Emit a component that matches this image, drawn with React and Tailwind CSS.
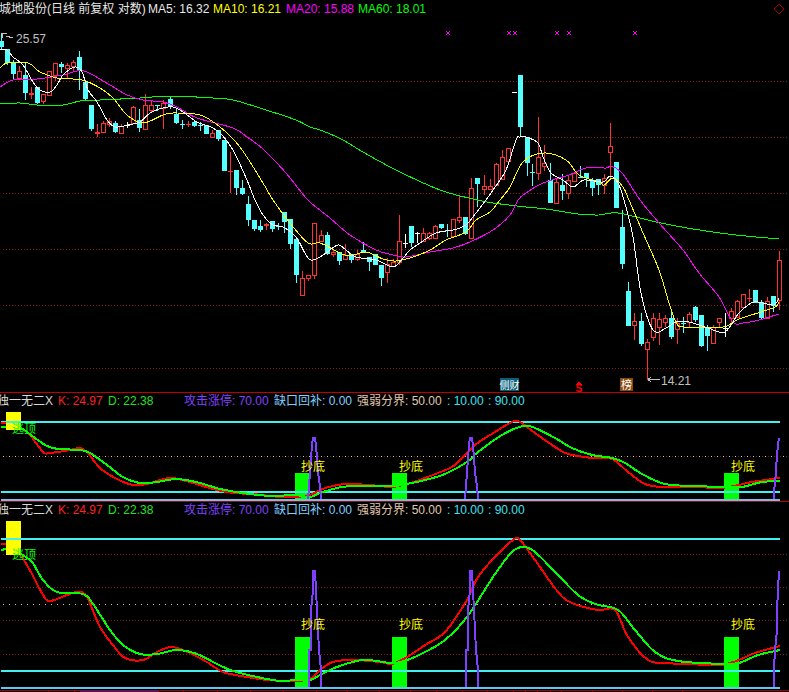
import React from 'react';

const CYAN = '#54ffff';
const RED = '#ff3232';
const PURPLE = '#8040ff';

// x, colour, wick top, body top, body bottom, wick bottom
const candles = [
  [1, 'c', 33, 41, 47, 50], [7, 'c', 49, 49, 63, 65], [13, 'c', 60, 63, 74, 79], [19, 'r', 66, 71, 78, 78],
  [25, 'c', 63, 75, 93, 100], [31, 'r', 87, 93, 94, 99], [37, 'c', 87, 87, 103, 104], [43, 'r', 94, 94, 101, 104],
  [49, 'r', 71, 71, 95, 95], [55, 'r', 63, 63, 75, 81], [61, 'c', 62, 64, 67, 73], [67, 'r', 63, 65, 68, 79],
  [73, 'r', 60, 62, 66, 71], [79, 'c', 51, 57, 71, 90], [85, 'c', 80, 82, 99, 101], [91, 'c', 105, 105, 129, 131],
  [97, 'r', 124, 132, 133, 137], [103, 'r', 121, 123, 132, 133], [109, 'r', 118, 121, 124, 127], [115, 'c', 121, 123, 132, 133],
  [121, 'r', 124, 126, 133, 133], [127, 'w', 122, 125, 125, 128], [133, 'r', 106, 107, 123, 124], [139, 'c', 109, 120, 128, 132],
  [145, 'r', 94, 105, 129, 129], [151, 'r', 100, 105, 110, 113], [157, 'c', 105, 105, 105, 111], [163, 'r', 100, 103, 108, 129],
  [170, 'c', 96, 99, 107, 109], [176, 'c', 108, 114, 123, 124], [182, 'c', 120, 124, 124, 129], [188, 'r', 121, 124, 124, 127],
  [194, 'c', 121, 122, 126, 127], [200, 'c', 122, 125, 125, 131], [206, 'c', 125, 125, 134, 134], [212, 'r', 130, 133, 137, 137],
  [218, 'c', 130, 130, 139, 141], [224, 'c', 140, 140, 171, 171], [230, 'r', 152, 171, 171, 193], [236, 'c', 170, 170, 188, 195],
  [242, 'c', 180, 188, 194, 195], [248, 'c', 196, 204, 220, 226], [254, 'c', 220, 220, 229, 231], [260, 'c', 220, 226, 230, 232],
  [266, 'r', 223, 224, 225, 230], [272, 'c', 221, 221, 229, 232], [278, 'c', 223, 226, 226, 230], [284, 'c', 212, 212, 222, 233],
  [290, 'c', 219, 219, 244, 249], [296, 'c', 239, 239, 275, 283], [302, 'r', 271, 278, 295, 295], [308, 'r', 275, 275, 278, 281],
  [314, 'r', 223, 223, 275, 279], [321, 'r', 230, 235, 241, 241], [327, 'c', 232, 235, 254, 255], [333, 'r', 250, 252, 254, 257],
  [339, 'c', 252, 252, 261, 265], [345, 'r', 244, 255, 259, 259], [351, 'c', 254, 254, 260, 263], [357, 'r', 250, 254, 259, 261],
  [363, 'c', 242, 250, 253, 253], [369, 'c', 257, 257, 262, 271], [375, 'c', 254, 254, 265, 265], [381, 'c', 265, 265, 278, 286],
  [387, 'r', 258, 264, 272, 283], [393, 'r', 259, 262, 266, 266], [399, 'r', 215, 241, 262, 265], [405, 'w', 234, 243, 243, 248],
  [411, 'c', 226, 226, 243, 247], [417, 'w', 232, 233, 233, 243], [423, 'r', 228, 233, 241, 241], [429, 'r', 232, 233, 238, 240],
  [435, 'r', 225, 226, 238, 238], [441, 'c', 224, 224, 228, 229], [447, 'c', 224, 230, 230, 237], [453, 'r', 219, 219, 236, 236],
  [459, 'r', 196, 217, 220, 223], [465, 'c', 217, 217, 234, 235], [471, 'r', 178, 188, 238, 238], [477, 'c', 178, 178, 184, 207],
  [484, 'r', 175, 186, 189, 195], [490, 'r', 179, 186, 189, 189], [496, 'r', 163, 164, 185, 185], [502, 'r', 150, 157, 179, 179],
  [508, 'r', 148, 148, 161, 161], [514, 'w', 92, 92, 92, 92], [520, 'c', 75, 75, 127, 137], [527, 'c', 137, 137, 163, 176],
  [532, 'c', 164, 172, 172, 186], [538, 'r', 117, 157, 173, 180], [544, 'r', 145, 163, 166, 171], [550, 'c', 163, 180, 203, 203],
  [556, 'r', 178, 182, 203, 203], [562, 'c', 174, 185, 191, 200], [568, 'r', 175, 180, 193, 199], [574, 'r', 172, 173, 181, 181],
  [580, 'c', 166, 177, 177, 177], [586, 'c', 173, 173, 178, 187], [592, 'c', 178, 180, 188, 196], [598, 'c', 179, 179, 185, 195],
  [604, 'r', 174, 178, 185, 194], [610, 'r', 123, 146, 152, 178], [616, 'c', 162, 162, 208, 208], [622, 'c', 210, 227, 264, 269],
  [628, 'c', 282, 291, 326, 326], [634, 'r', 313, 321, 325, 340], [641, 'c', 313, 321, 344, 346], [647, 'r', 339, 342, 349, 380],
  [653, 'r', 313, 318, 337, 341], [659, 'r', 313, 319, 327, 345], [665, 'r', 315, 318, 322, 327], [671, 'c', 312, 318, 337, 339],
  [677, 'r', 318, 323, 329, 344], [683, 'c', 317, 323, 323, 333], [689, 'r', 312, 314, 322, 327], [695, 'c', 306, 307, 320, 322],
  [701, 'c', 315, 315, 346, 347], [707, 'c', 325, 328, 336, 351], [713, 'r', 325, 327, 343, 343], [719, 'r', 318, 318, 322, 327],
  [725, 'w', 313, 328, 328, 337], [731, 'r', 308, 311, 318, 323], [737, 'r', 300, 301, 317, 317], [743, 'r', 294, 294, 307, 307],
  [749, 'r', 289, 298, 298, 302], [755, 'c', 290, 290, 303, 303], [761, 'c', 300, 302, 318, 319], [767, 'r', 297, 301, 318, 319],
  [773, 'c', 296, 296, 306, 312], [779, 'r', 251, 260, 300, 310],
];

const ma5 = [[0,50],[7,50],[13,57],[23,65],[33,82],[40,90],[50,92],[57,85],[63,75],[75,67],[82,72],[88,90],[97,102],[107,120],[115,127],[128,125],[140,122],[150,113],[163,108],[173,107],[183,112],[197,122],[213,128],[222,135],[233,150],[247,180],[255,200],[263,215],[273,225],[283,227],[296,237],[308,258],[316,259],[326,253],[338,245],[346,250],[356,257],[376,260],[393,267],[403,258],[410,250],[420,243],[436,233],[453,230],[466,225],[476,213],[486,200],[493,190],[506,170],[516,140],[520,137],[526,137],[538,143],[543,157],[551,173],[563,180],[573,187],[584,180],[603,182],[610,176],[618,183],[624,200],[633,237],[641,293],[653,330],[666,328],[676,322],[689,322],[708,328],[725,332],[739,313],[754,302],[773,305],[779,298]];
const ma10 = [[0,68],[7,63],[28,63],[40,72],[57,78],[82,80],[100,88],[113,98],[127,115],[143,123],[163,115],[173,113],[200,115],[220,127],[240,147],[263,183],[273,200],[290,223],[308,243],[320,243],[340,253],[350,256],[366,252],[383,259],[396,261],[413,257],[430,250],[446,240],[466,232],[476,220],[490,212],[500,200],[510,187],[523,162],[544,153],[566,160],[579,175],[599,182],[604,185],[613,178],[623,187],[629,200],[643,233],[659,270],[669,303],[676,322],[684,327],[723,327],[739,319],[773,308],[779,302]];
const ma20 = [[0,87],[13,80],[37,79],[63,75],[77,71],[87,72],[110,85],[127,95],[143,100],[163,102],[177,107],[197,118],[233,128],[247,137],[263,149],[286,173],[308,200],[330,218],[350,235],[376,250],[393,255],[406,257],[430,252],[453,248],[470,242],[493,230],[510,215],[518,200],[526,193],[543,183],[569,175],[586,168],[606,168],[611,166],[621,172],[629,183],[640,200],[659,223],[683,250],[699,273],[719,297],[733,322],[743,323],[759,320],[779,314]];
const ma60 = [[0,104],[20,103],[37,105],[63,105],[80,101],[100,100],[140,98],[170,96],[213,98],[233,100],[263,109],[296,120],[310,127],[323,131],[343,140],[363,152],[396,170],[440,190],[473,199],[493,203],[526,207],[546,209],[578,214],[599,215],[618,213],[656,222],[693,229],[736,235],[779,239]];

const kd1Red = [[1,423],[6,423]];
const kd1Green = [[1,427],[6,427]];
const k1 = [[21,428],[30,435],[43,452],[50,453],[70,450],[80,448],[88,453],[100,468],[117,479],[133,485],[147,484],[170,478],[193,483],[213,489],[233,493],[253,494],[280,497],[295,497],[310,495],[320,490],[333,486],[347,484],[370,485],[392,487],[407,484],[425,478],[438,473],[455,465],[475,445],[495,432],[512,422],[520,422],[535,433],[555,447],[568,454],[592,458],[612,459],[628,472],[645,484],[662,487],[695,487],[720,488],[739,485],[752,482],[780,478]];
const d1 = [[21,428],[27,432],[35,438],[47,446],[58,449],[80,450],[90,453],[107,465],[123,477],[140,483],[157,482],[177,479],[200,483],[220,489],[250,494],[273,496],[295,495],[310,497],[320,493],[337,488],[353,486],[392,486],[407,484],[425,480],[445,474],[467,462],[478,452],[502,435],[523,426],[535,428],[555,438],[572,448],[592,455],[612,458],[625,463],[642,474],[665,484],[695,486],[724,487],[742,487],[762,482],[780,481]];

const kd2Red = [[1,544],[6,544]];
const kd2Green = [[1,550],[6,549]];
const k2 = [[21,555],[32,574],[43,595],[50,601],[67,595],[78,592],[87,597],[100,627],[113,645],[125,658],[143,660],[157,652],[172,647],[190,653],[207,662],[223,672],[247,677],[267,680],[295,681],[310,679],[320,670],[333,662],[353,660],[380,662],[392,664],[407,657],[425,645],[445,632],[467,600],[478,577],[495,557],[513,540],[520,540],[535,560],[558,592],[572,603],[598,610],[615,610],[628,637],[648,660],[665,663],[688,664],[720,665],[739,660],[755,653],[780,646]];
const d2 = [[21,554],[32,562],[43,580],[57,592],[83,594],[93,604],[110,630],[123,645],[140,654],[157,654],[177,650],[197,654],[217,664],[233,671],[257,677],[280,681],[295,680],[310,680],[320,675],[337,667],[363,660],[392,663],[407,660],[425,652],[445,640],[467,617],[495,574],[512,552],[523,547],[535,552],[558,575],[578,595],[595,604],[618,610],[635,630],[655,652],[678,661],[724,664],[739,663],[758,655],[780,650]];

const pts = (list) => list.map((p) => p.join(',')).join(' ');

// catmull-rom through the points so the averages don't look kinked
const curve = (list) => {
  let d = `M${list[0][0]} ${list[0][1]}`;
  for (let i = 0; i < list.length - 1; i++) {
    const p0 = list[i - 1] || list[i];
    const p1 = list[i];
    const p2 = list[i + 1];
    const p3 = list[i + 2] || p2;
    const c1 = [p1[0] + (p2[0] - p0[0]) / 6, p1[1] + (p2[1] - p0[1]) / 6];
    const c2 = [p2[0] - (p3[0] - p1[0]) / 6, p2[1] - (p3[1] - p1[1]) / 6];
    d += ` C${c1[0]} ${c1[1]} ${c2[0]} ${c2[1]} ${p2[0]} ${p2[1]}`;
  }
  return d;
};

// purple spikes are the same shape, only moved along x
const spike1 = (dx) => pts([[308,499],[309,487],[310,472],[312,445],[313,438],[315,438],[316,445],[318,472],[320,487],[321,499]].map(([x, y]) => [x + dx, y]));
const spike2 = (dx) => pts([[309,687],[309,650],[311,650],[311,610],[313,590],[313,571],[315,571],[316,590],[317,610],[319,650],[321,670],[321,687]].map(([x, y]) => [x + dx, y]));

const Line = ({ points, color, width = 1 }) => (
  <path d={curve(points)} fill="none" stroke={color} strokeWidth={width} />
);

const Dots = ({ y, color = '#8c1c1c', dash = '1 2', from = 3, to = 789 }) => (
  <line x1={from} x2={to} y1={y + 0.5} y2={y + 0.5} stroke={color} strokeDasharray={dash} />
);

const Candle = ({ c }) => {
  const [x, kind, wickTop, top, bottom, wickBottom] = c;
  const color = kind === 'c' ? CYAN : kind === 'r' ? RED : '#ffffff';
  const doji = bottom - top < 1;
  return (
    <g>
      <line x1={x + 0.5} x2={x + 0.5} y1={wickTop} y2={wickBottom} stroke={color} />
      {doji ? (
        <line x1={x - 2} x2={x + 3} y1={top + 0.5} y2={top + 0.5} stroke={color} />
      ) : kind === 'r' ? (
        <rect x={x - 1.5} y={top + 0.5} width={4} height={bottom - top} fill="#000000" stroke={color} />
      ) : (
        <rect x={x - 2} y={top} width={5} height={bottom - top} fill={color} />
      )}
    </g>
  );
};

const Cross = ({ x }) => (
  <path d={`M${x - 2} 31 L${x + 2} 35 M${x + 2} 31 L${x - 2} 35`} stroke="#ff00ff" fill="none" />
);

const Label = ({ x, y, color, children }) => (
  <text x={x} y={y} fill={color} fontSize="12" textAnchor="middle" fontFamily="'Liberation Sans','Noto Sans CJK SC',sans-serif">
    {children}
  </text>
);

const MainChart = () => (
  <svg className="absolute inset-0" width="789" height="393" viewBox="0 0 789 393" shapeRendering="crispEdges">
    <Dots y={81} /><Dots y={137} /><Dots y={193} /><Dots y={249} /><Dots y={305} /><Dots y={368} />
    {candles.map((c) => <Candle key={c[0]} c={c} />)}
    <Line points={ma60} color="#00ff00" />
    <Line points={ma20} color="#ff00ff" />
    <Line points={ma10} color="#ffff00" />
    <Line points={ma5} color="#ffffff" />
    {[448, 509, 515, 557, 569, 635].map((x) => <Cross key={x} x={x} />)}
    <path d="M779 4 L784 9 L779 14 L774 9 Z" fill="none" stroke="#a00000" />
    <path d="M1 33 L7 33 M2 33 L2 38 M6 36 L13 38" stroke="#c0c0c0" fill="none" />
    <text x="16" y="43" fill="#c0c0c0" fontSize="12" fontFamily="'Liberation Sans',sans-serif">25.57</text>
    <path d="M648 379.5 L660 379.5 M648 379.5 L651 377 M648 379.5 L651 382" stroke="#c0c0c0" fill="none" />
    <text x="661" y="385" fill="#c0c0c0" fontSize="12" fontFamily="'Liberation Sans',sans-serif">14.21</text>
    <rect x="500" y="378" width="19" height="13" fill="#0a5f78" />
    <text x="509.5" y="389" fill="#ffffff" fontSize="10" textAnchor="middle" fontFamily="'Noto Sans CJK SC',sans-serif">侧财</text>
    <path d="M579 381 L582 385 L576 385 Z" fill="#ff0000" />
    <text x="579" y="392" fill="#ff0000" fontSize="10" fontWeight="700" textAnchor="middle" fontFamily="'Liberation Sans',sans-serif">S</text>
    <rect x="620" y="378" width="13" height="13" fill="#8a4a10" />
    <text x="626.5" y="389" fill="#ffffff" fontSize="11" textAnchor="middle" fontFamily="'Noto Sans CJK SC',sans-serif">榜</text>
  </svg>
);

const FirstIndicator = () => (
  <svg className="absolute inset-0" width="789" height="109" viewBox="0 393 789 109" shapeRendering="crispEdges">
    <Dots y={456} dash="1 2" />
    <Dots y={456} color="#e0c8b0" dash="1 5" />
    <rect x="6" y="412" width="15" height="18" fill="#ffff00" />
    {[295, 392, 724].map((x) => <rect key={x} x={x} y="473" width="15" height="26" fill="#00ff00" />)}
    <line x1="1" x2="780" y1="421.5" y2="421.5" stroke="#40f0f0" strokeWidth="2" />
    <line x1="1" x2="780" y1="491.5" y2="491.5" stroke="#40f0f0" strokeWidth="2" />
    <line x1="1" x2="780" y1="499.5" y2="499.5" stroke="#60c8f0" strokeWidth="2" />
    <Line points={kd1Red} color="#ff0000" width={2} />
    <Line points={kd1Green} color="#00ff00" width={2} />
    <Line points={k1} color="#ff0000" width={2} />
    <Line points={d1} color="#00ff00" width={2} />
    <polyline points={spike1(0)} fill="none" stroke={PURPLE} strokeWidth="2" />
    <polyline points={spike1(157)} fill="none" stroke={PURPLE} strokeWidth="2" />
    <polyline points={pts([[774,499],[774,490],[775,484],[776,470],[777,455],[778,445],[779,438]])} fill="none" stroke={PURPLE} strokeWidth="2" />
    <Label x={24} y={433} color="#00ff00">逃顶</Label>
    <Label x={313} y={471} color="#ffff00">抄底</Label>
    <Label x={411} y={471} color="#ffff00">抄底</Label>
    <Label x={743} y={471} color="#ffff00">抄底</Label>
  </svg>
);

const SecondIndicator = () => (
  <svg className="absolute inset-0" width="789" height="190" viewBox="0 502 789 190" shapeRendering="crispEdges">
    <Dots y={554} /><Dots y={587} /><Dots y={620} /><Dots y={654} />
    <Dots y={604} color="#e0c8b0" dash="1 5" />
    <rect x="6" y="521" width="15" height="34" fill="#ffff00" />
    {[295, 392, 724].map((x) => <rect key={x} x={x} y="637" width="15" height="50" fill="#00ff00" />)}
    <line x1="1" x2="780" y1="538.5" y2="538.5" stroke="#40f0f0" strokeWidth="2" />
    <line x1="1" x2="780" y1="670.5" y2="670.5" stroke="#40f0f0" strokeWidth="2" />
    <line x1="1" x2="780" y1="687.5" y2="687.5" stroke="#60c8f0" strokeWidth="2" />
    <Line points={kd2Red} color="#ff0000" width={2} />
    <Line points={kd2Green} color="#00ff00" width={2} />
    <Line points={k2} color="#ff0000" width={2} />
    <Line points={d2} color="#00ff00" width={2} />
    <polyline points={spike2(0)} fill="none" stroke={PURPLE} strokeWidth="2" />
    <polyline points={spike2(157)} fill="none" stroke={PURPLE} strokeWidth="2" />
    <polyline points={pts([[774,687],[774,669],[775,650],[777,630],[777,610],[778,590],[779,571]])} fill="none" stroke={PURPLE} strokeWidth="2" />
    <Label x={24} y={559} color="#00ff00">逃顶</Label>
    <Label x={313} y={629} color="#ffff00">抄底</Label>
    <Label x={411} y={629} color="#ffff00">抄底</Label>
    <Label x={743} y={629} color="#ffff00">抄底</Label>
    <line x1="0" x2="789" y1="690.5" y2="690.5" stroke="#a00000" />
    <line x1="80" x2="158" y1="691.5" y2="691.5" stroke="#1a2a90" />
    {[48, 74, 158, 183, 217, 250, 283, 316, 347, 379, 410, 436, 462, 487, 513, 525, 537, 550, 561, 592, 622, 652, 682].map((x) => (
      <line key={x} x1={x + 0.5} x2={x + 0.5} y1="691" y2="692" stroke="#a00000" />
    ))}
  </svg>
);

const IndicatorHeader = () => (
  <div className="relative flex h-[16px] items-center whitespace-nowrap text-[12px] leading-none -ml-[3px]">
    <span className="w-[61px] text-[#d8d8d8]">独一无二X</span>
    <span className="w-[50px] text-[#ff2020]">K: 24.97</span>
    <span className="w-[76px] text-[#20e020]">D: 22.38</span>
    <span className="w-[90px] text-[#8040ff]">攻击涨停: 70.00</span>
    <span className="w-[83px] text-[#80d0ff]">缺口回补: 0.00</span>
    <span className="w-[90px] text-[#e0c8b0]">强弱分界: 50.00</span>
    <span className="w-[41px] text-[#40e0f0]">: 10.00</span>
    <span className="text-[#40e0f0]">: 90.00</span>
  </div>
);

export default function App() {
  return (
    <div className="flex h-[692px] w-[789px] flex-col overflow-hidden bg-black font-['Liberation_Sans','Noto_Sans_CJK_SC',sans-serif]">
      <div className="relative h-[393px] border-b border-[#c00000]">
        <MainChart />
        <div className="relative flex h-[18px] items-center whitespace-nowrap text-[12px] leading-none -ml-[1px]">
          <span className="w-[149px] text-[#e8e8e8]">城地股份(日线 前复权 对数)</span>
          <span className="w-[65px] text-[#e8e8e8]">MA5: 16.32</span>
          <span className="w-[73px] text-[#ffff00]">MA10: 16.21</span>
          <span className="w-[72px] text-[#ff00ff]">MA20: 15.88</span>
          <span className="text-[#00ff00]">MA60: 18.01</span>
        </div>
      </div>
      <div className="relative h-[109px] border-b border-[#c00000]">
        <FirstIndicator />
        <IndicatorHeader />
      </div>
      <div className="relative h-[190px]">
        <SecondIndicator />
        <IndicatorHeader />
      </div>
    </div>
  );
}
